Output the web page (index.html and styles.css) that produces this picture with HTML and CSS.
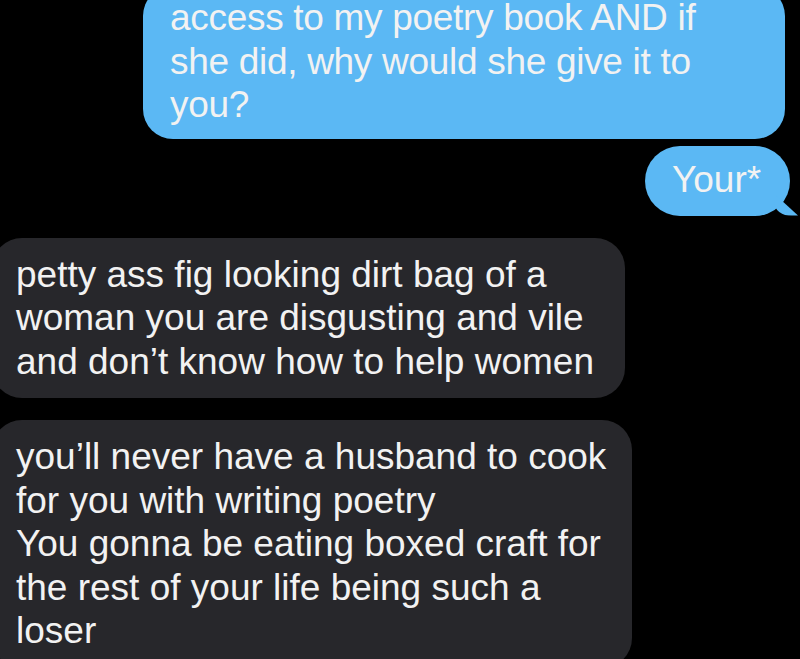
FILE: index.html
```html
<!DOCTYPE html>
<html lang="en">
<head>
<meta charset="utf-8">
<title>Messages</title>
<link rel="stylesheet" href="styles.css">
</head>
<body>
<div class="thread">
  <div class="bubble sent first">access to my poetry book AND if<br>she did, why would she give it to<br>you?</div>
  <div class="bubble sent short tail">Your*</div>
  <div class="bubble recv one">petty ass fig looking dirt bag of a<br>woman you are disgusting and vile<br>and don’t know how to help women</div>
  <div class="bubble recv two">you’ll never have a husband to cook<br>for you with writing poetry<br>You gonna be eating boxed craft for<br>the rest of your life being such a<br>loser</div>
</div>
</body>
</html>
```
FILE: styles.css
```css
html, body {
  margin: 0;
  padding: 0;
  background: #000;
  height: 100%;
  overflow: hidden;
}
.thread {
  display: flex;
  flex-direction: column;
  font-family: "Liberation Sans", Arial, sans-serif;
  font-size: 37px;
  line-height: 43.5px;
  color: #f2f2f2;
}
.bubble {
  border-radius: 30px;
  box-sizing: border-box;
  white-space: nowrap;
}
.sent {
  background: #5bb8f4;
  align-self: flex-end;
}
.first {
  width: 642px;
  margin-top: -14px;
  margin-right: 15px;
  padding: 10px 20px 12.5px 27px;
  letter-spacing: -0.3px;
}
.short {
  position: relative;
  width: 145px;
  margin-top: 7px;
  margin-right: 10px;
  padding: 12px 20px 14px 27px;
  border-radius: 35px;
}
.tail::after {
  content: "";
  position: absolute;
  right: -8px;
  bottom: 0;
  width: 24px;
  height: 22px;
  background: #5bb8f4;
  border-bottom-left-radius: 18px 14px;
  clip-path: polygon(0 0, 100% 100%, 0 100%);
}
.recv {
  background: #27272b;
  align-self: flex-start;
  margin-left: -8px;
  padding: 15px 20px 15px 24px;
}
.one {
  width: 633px;
  margin-top: 22px;
}
.two {
  width: 640px;
  margin-top: 22px;
}
```
